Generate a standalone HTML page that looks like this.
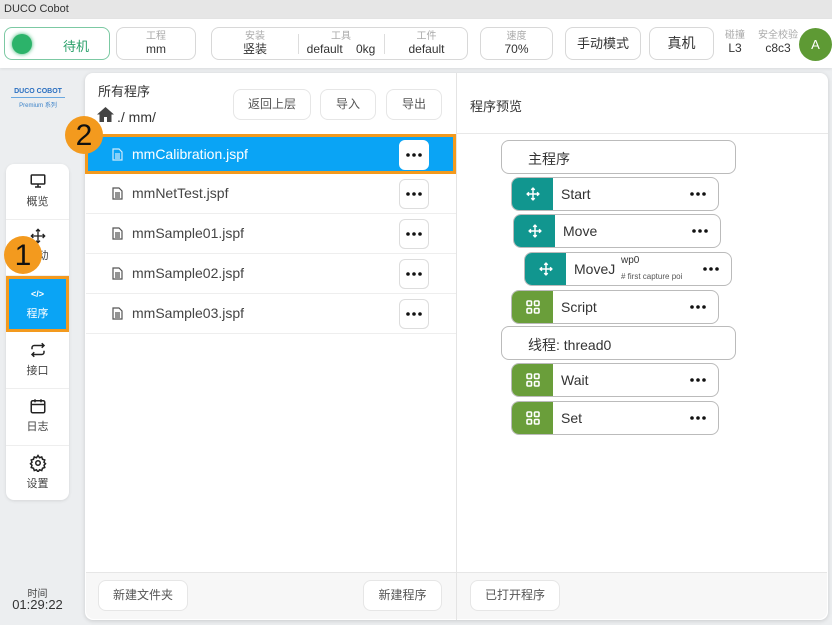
<!DOCTYPE html>
<html><head><meta charset="utf-8"><style>
*{box-sizing:border-box;margin:0;padding:0}
body{width:832px;height:625px;overflow:hidden;background:#eceef0;font-family:"Liberation Sans","Noto Sans CJK SC",sans-serif;color:#333;position:relative}
.a{position:absolute}
.box{position:absolute;border:1px solid #d8d8d8;border-radius:8px;background:#fff;text-align:center}
.lbl{font-size:10px;color:#aaa;line-height:11px;margin-top:3px}
.val{font-size:12px;color:#333;line-height:14px}
.nav{position:absolute;left:6px;width:63px;text-align:center;font-size:11px;color:#444;border-bottom:1px solid #eee}
.row{position:absolute;left:86px;width:370px;height:40px;border-bottom:1px solid #eee;font-size:14px;color:#444}
.row .t{position:absolute;left:46px;top:11px}
.row .ic{position:absolute;left:26px;top:13px}
.dots{position:absolute;left:313px;top:5px;width:30px;height:30px;border:1px solid #ddd;border-radius:6px;background:#fff;display:flex;align-items:center;justify-content:center}
.btn{position:absolute;border:1px solid #e6e6e6;border-radius:8px;background:#fff;font-size:12px;color:#555;text-align:center}
.node{position:absolute;height:34px;border:1px solid #bbb;border-radius:8px;background:#fff;font-size:14px;color:#333;overflow:hidden}
.node .blk{position:absolute;left:0;top:0;bottom:0;width:41px;display:flex;align-items:center;justify-content:center}
.node .t{position:absolute;left:49px;top:8px}
.node .d{position:absolute;right:12px;top:14px}
.circ{position:absolute;width:38px;height:38px;border-radius:50%;background:#f39a1e;color:#111;font-size:30px;text-align:center;line-height:40px}
</style></head><body>
<svg width="0" height="0" style="position:absolute"><defs><g id="dd"><circle cx="2" cy="2" r="1.8" fill="#111"/><circle cx="8" cy="2" r="1.8" fill="#111"/><circle cx="14" cy="2" r="1.8" fill="#111"/></g></defs></svg>
<div class="a" style="left:0;top:0;width:832px;height:19px;background:#e6e6e6;font-size:11px;color:#333;padding:3px 0 0 4px">DUCO Cobot</div>
<div class="a" style="left:0;top:19px;width:832px;height:49px;background:#fff;box-shadow:0 1px 3px rgba(0,0,0,.08)"></div>
<div class="box" style="left:4px;top:27px;width:106px;height:33px;border-color:#7cc9a3">
 <div class="a" style="left:7px;top:6px;width:20px;height:20px;border-radius:50%;background:#2cb36a;box-shadow:0 0 4px #2cb36a"></div>
 <div class="a" style="left:58px;top:8px;font-size:13px;color:#2aa06a">待机</div></div>
<div class="box" style="left:116px;top:27px;width:80px;height:33px"><div class="lbl">工程</div><div class="val">mm</div></div>
<div class="box" style="left:211px;top:27px;width:257px;height:33px">
 <div class="a" style="left:0;width:86px"><div class="lbl">安装</div><div class="val">竖装</div></div>
 <div class="a" style="left:86px;top:6px;width:1px;height:20px;background:#ddd"></div>
 <div class="a" style="left:86px;width:86px"><div class="lbl">工具</div><div class="val">default &nbsp;&nbsp; 0kg</div></div>
 <div class="a" style="left:172px;top:6px;width:1px;height:20px;background:#ddd"></div>
 <div class="a" style="left:172px;width:85px"><div class="lbl">工件</div><div class="val">default</div></div></div>
<div class="box" style="left:480px;top:27px;width:73px;height:33px"><div class="lbl">速度</div><div class="val">70%</div></div>
<div class="box" style="left:565px;top:27px;width:76px;height:33px;font-size:13px;line-height:31px">手动模式</div>
<div class="box" style="left:649px;top:27px;width:65px;height:33px;font-size:14px;line-height:31px">真机</div>
<div class="a" style="left:722px;top:30px;width:26px;text-align:center"><div class="lbl" style="margin:0">碰撞</div><div class="val">L3</div></div>
<div class="a" style="left:756px;top:30px;width:44px;text-align:center"><div class="lbl" style="margin:0">安全校验</div><div class="val">c8c3</div></div>
<div class="a" style="left:799px;top:28px;width:33px;height:33px;border-radius:50%;background:#5e9a34;color:#fff;font-size:13px;text-align:center;line-height:33px">A</div>

<div class="a" style="left:4px;top:88px;width:68px;text-align:center;font-size:7px;font-weight:bold;color:#2a6fc0;white-space:nowrap">DUCO COBOT</div>
<div class="a" style="left:11px;top:97px;width:54px;height:1px;background:#6aa8e0"></div>
<div class="a" style="left:4px;top:100px;width:68px;text-align:center;font-size:6px;color:#3b82c8;white-space:nowrap">Premium 系列</div>

<div class="a" style="left:6px;top:164px;width:63px;height:336px;background:#fff;border-radius:8px;box-shadow:0 1px 3px rgba(0,0,0,.1)"></div>
<div class="nav" style="top:164px;height:56px"><svg width="18" height="18" viewBox="0 0 24 24" style="margin-top:8px" fill="none" stroke="#222" stroke-width="2"><rect x="3" y="4" width="18" height="12" rx="1"/><path d="M12 16v4M8 20h8"/></svg><div>概览</div></div>
<div class="nav" style="top:220px;height:56px"><svg width="16" height="16" viewBox="0 0 24 24" style="margin-top:8px" fill="none" stroke="#222" stroke-width="2"><path d="M12 2v20M2 12h20M9 5l3-3 3 3M9 19l3 3 3-3M5 9l-3 3 3 3M19 9l3 3-3 3"/></svg><div>移动</div></div>
<div class="a" style="left:6px;top:276px;width:63px;height:56px;background:#0aa4f5;border:3px solid #f39a1e;text-align:center;color:#fff;font-size:11px"><div style="margin-top:10px;font-size:9px;font-weight:bold">&lt;/&gt;</div><div style="margin-top:6px">程序</div></div>
<div class="nav" style="top:332px;height:57px"><svg width="18" height="18" viewBox="0 0 24 24" style="margin-top:9px" fill="none" stroke="#222" stroke-width="2"><path d="M4 11V9a3 3 0 013-3h13M17 3l3 3-3 3M20 13v2a3 3 0 01-3 3H4M7 21l-3-3 3-3"/></svg><div>接口</div></div>
<div class="nav" style="top:389px;height:57px"><svg width="18" height="18" viewBox="0 0 24 24" style="margin-top:8px" fill="none" stroke="#222" stroke-width="2"><rect x="3" y="5" width="18" height="16" rx="2"/><path d="M3 10h18M8 3v4M16 3v4"/></svg><div>日志</div></div>
<div class="nav" style="top:446px;height:54px;border:none"><svg width="18" height="18" viewBox="0 0 24 24" style="margin-top:8px" fill="none" stroke="#222" stroke-width="2"><circle cx="12" cy="12" r="3"/><path d="M12 2l2 3 3-1 1 3 3 1-1 3 2 2-2 2 1 3-3 1-1 3-3-1-2 3-2-3-3 1-1-3-3-1 1-3-2-2 2-2-1-3 3-1 1-3 3 1z"/></svg><div>设置</div></div>
<div class="a" style="left:6px;top:585px;width:63px;text-align:center;font-size:10px;color:#444">时间</div>
<div class="a" style="left:6px;top:597px;width:63px;text-align:center;font-size:13px;color:#333">01:29:22</div>

<div class="a" style="left:85px;top:73px;width:743px;height:547px;background:#fff;border-radius:8px;box-shadow:0 1px 4px rgba(0,0,0,.15)"></div>
<div class="a" style="left:456px;top:73px;width:1px;height:547px;background:#e4e4e4"></div>
<div class="a" style="left:86px;top:572px;width:741px;height:47px;background:#f7f7f7;border-top:1px solid #e6e6e6;border-radius:0 0 8px 8px"></div>
<div class="a" style="left:456px;top:572px;width:1px;height:48px;background:#e4e4e4"></div>
<div class="a" style="left:98px;top:81px;font-size:13px;color:#333">所有程序</div>
<svg class="a" style="left:97px;top:107px" width="17" height="15" viewBox="0 0 17 15"><path d="M8.5 0L0 7.5h2.5V15h4.5v-5h3v5h4.5V7.5H17z" fill="#444"/></svg>
<div class="a" style="left:117px;top:109px;font-size:14px;color:#333">./ mm/</div>
<div class="btn" style="left:233px;top:89px;width:78px;height:31px;line-height:29px">返回上层</div>
<div class="btn" style="left:320px;top:89px;width:56px;height:31px;line-height:29px">导入</div>
<div class="btn" style="left:386px;top:89px;width:56px;height:31px;line-height:29px">导出</div>
<div class="a" style="left:456px;top:133px;width:372px;height:1px;background:#e8e8e8"></div>
<div class="a" style="left:470px;top:96px;font-size:13px;color:#333">程序预览</div>

<div class="row" style="top:134px;left:85px;width:371px;background:#0aa4f5;border:3px solid #f39a1e;color:#fff"><svg class="ic" style="left:24px;top:11px" width="11" height="13" viewBox="0 0 11 13" fill="none" stroke="#cfe9fb" stroke-width="1.2"><path d="M1 1h6l3 3v8H1zM3 6h5M3 8h5M3 10h5"/></svg><span class="t" style="left:44px;top:9px">mmCalibration.jspf</span><div class="dots" style="left:311px;top:3px;border-color:#fff"><svg width="16" height="4"><use href="#dd"/></svg></div></div>
<div class="row" style="top:174px"><svg class="ic" width="11" height="13" viewBox="0 0 11 13" fill="none" stroke="#555" stroke-width="1.2"><path d="M1 1h6l3 3v8H1zM3 6h5M3 8h5M3 10h5"/></svg><span class="t">mmNetTest.jspf</span><div class="dots"><svg width="16" height="4"><use href="#dd"/></svg></div></div>
<div class="row" style="top:214px"><svg class="ic" width="11" height="13" viewBox="0 0 11 13" fill="none" stroke="#555" stroke-width="1.2"><path d="M1 1h6l3 3v8H1zM3 6h5M3 8h5M3 10h5"/></svg><span class="t">mmSample01.jspf</span><div class="dots"><svg width="16" height="4"><use href="#dd"/></svg></div></div>
<div class="row" style="top:254px"><svg class="ic" width="11" height="13" viewBox="0 0 11 13" fill="none" stroke="#555" stroke-width="1.2"><path d="M1 1h6l3 3v8H1zM3 6h5M3 8h5M3 10h5"/></svg><span class="t">mmSample02.jspf</span><div class="dots"><svg width="16" height="4"><use href="#dd"/></svg></div></div>
<div class="row" style="top:294px"><svg class="ic" width="11" height="13" viewBox="0 0 11 13" fill="none" stroke="#555" stroke-width="1.2"><path d="M1 1h6l3 3v8H1zM3 6h5M3 8h5M3 10h5"/></svg><span class="t">mmSample03.jspf</span><div class="dots"><svg width="16" height="4"><use href="#dd"/></svg></div></div>

<div class="node" style="left:501px;top:140px;width:235px"><span class="t" style="left:26px">主程序</span></div>
<div class="node" style="left:511px;top:177px;width:208px"><div class="blk" style="background:#11968f"><svg width="14" height="14" viewBox="0 0 24 24" fill="none" stroke="#fff" stroke-width="2.5"><path d="M12 2v20M2 12h20M9 5l3-3 3 3M9 19l3 3 3-3M5 9l-3 3 3 3M19 9l3 3-3 3"/></svg></div><span class="t">Start</span><svg class="d" width="16" height="4"><use href="#dd"/></svg></div>
<div class="node" style="left:513px;top:214px;width:208px"><div class="blk" style="background:#11968f"><svg width="14" height="14" viewBox="0 0 24 24" fill="none" stroke="#fff" stroke-width="2.5"><path d="M12 2v20M2 12h20M9 5l3-3 3 3M9 19l3 3 3-3M5 9l-3 3 3 3M19 9l3 3-3 3"/></svg></div><span class="t">Move</span><svg class="d" width="16" height="4"><use href="#dd"/></svg></div>
<div class="node" style="left:524px;top:252px;width:208px"><div class="blk" style="background:#11968f"><svg width="14" height="14" viewBox="0 0 24 24" fill="none" stroke="#fff" stroke-width="2.5"><path d="M12 2v20M2 12h20M9 5l3-3 3 3M9 19l3 3 3-3M5 9l-3 3 3 3M19 9l3 3-3 3"/></svg></div><span class="t">MoveJ</span><span class="a" style="left:96px;top:2px;font-size:10px">wp0</span><span class="a" style="left:96px;top:19px;font-size:8px;color:#555">#&nbsp;first capture poi</span><svg class="d" width="16" height="4"><use href="#dd"/></svg></div>
<div class="node" style="left:511px;top:290px;width:208px"><div class="blk" style="background:#6a9e3a"><svg width="14" height="14" viewBox="0 0 14 14" fill="none" stroke="#fff" stroke-width="1.6"><rect x="1" y="1" width="4.5" height="4.5" rx="1"/><rect x="8.5" y="1" width="4.5" height="4.5" rx="1"/><rect x="1" y="8.5" width="4.5" height="4.5" rx="1"/><rect x="8.5" y="8.5" width="4.5" height="4.5" rx="1"/></svg></div><span class="t">Script</span><svg class="d" width="16" height="4"><use href="#dd"/></svg></div>
<div class="node" style="left:501px;top:326px;width:235px"><span class="t" style="left:26px">线程: thread0</span></div>
<div class="node" style="left:511px;top:363px;width:208px"><div class="blk" style="background:#6a9e3a"><svg width="14" height="14" viewBox="0 0 14 14" fill="none" stroke="#fff" stroke-width="1.6"><rect x="1" y="1" width="4.5" height="4.5" rx="1"/><rect x="8.5" y="1" width="4.5" height="4.5" rx="1"/><rect x="1" y="8.5" width="4.5" height="4.5" rx="1"/><rect x="8.5" y="8.5" width="4.5" height="4.5" rx="1"/></svg></div><span class="t">Wait</span><svg class="d" width="16" height="4"><use href="#dd"/></svg></div>
<div class="node" style="left:511px;top:401px;width:208px"><div class="blk" style="background:#6a9e3a"><svg width="14" height="14" viewBox="0 0 14 14" fill="none" stroke="#fff" stroke-width="1.6"><rect x="1" y="1" width="4.5" height="4.5" rx="1"/><rect x="8.5" y="1" width="4.5" height="4.5" rx="1"/><rect x="1" y="8.5" width="4.5" height="4.5" rx="1"/><rect x="8.5" y="8.5" width="4.5" height="4.5" rx="1"/></svg></div><span class="t">Set</span><svg class="d" width="16" height="4"><use href="#dd"/></svg></div>

<div class="btn" style="left:98px;top:580px;width:90px;height:31px;line-height:29px">新建文件夹</div>
<div class="btn" style="left:363px;top:580px;width:79px;height:31px;line-height:29px">新建程序</div>
<div class="btn" style="left:470px;top:580px;width:90px;height:31px;line-height:29px">已打开程序</div>

<div class="circ" style="left:65px;top:116px">2</div>
<div class="circ" style="left:4px;top:236px">1</div>
</body></html>
